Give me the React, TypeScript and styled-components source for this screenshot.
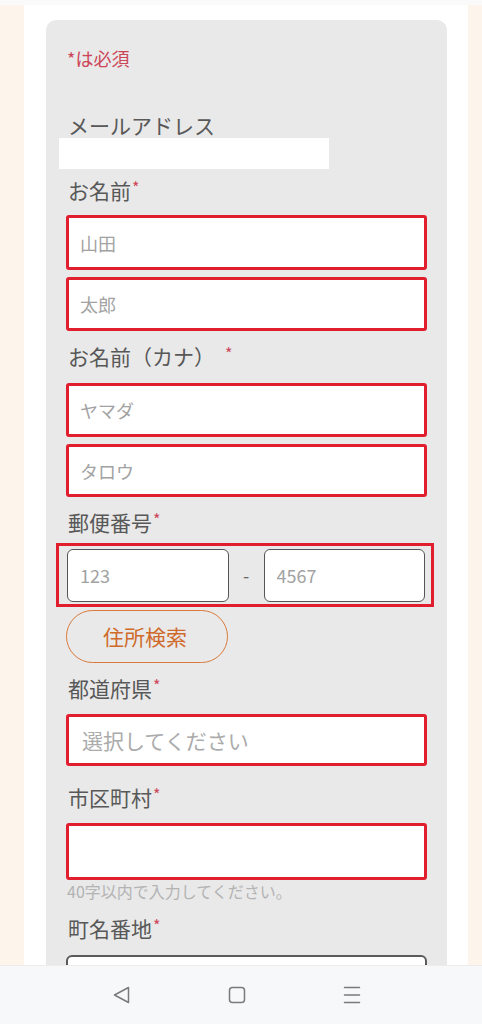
import React from "react";
import styled, { createGlobalStyle } from "styled-components";

const GlobalStyle = createGlobalStyle`
  html, body {
    margin: 0;
    padding: 0;
    background: #fafafa;
    overflow: hidden;
  }
  * {
    box-sizing: border-box;
  }
`;

const FONT = `"Noto Sans CJK JP", "Noto Sans", sans-serif`;

const Page = styled.div`
  height: 1024px;
  padding-top: 5px;
  background: #fafafa;
  overflow: hidden;
`;

const Frame = styled.div`
  display: flex;
  height: 1019px;
  background: #fdf5ec;
  padding: 0 14px 0 24px;
`;

const Column = styled.div`
  width: 444px;
  flex: none;
  background: #ffffff;
  padding: 15px 21px 0 22px;
`;

const Card = styled.form`
  width: 401px;
  background: #e9e9e9;
  border-radius: 10px;
  padding: 25px 20px 40px 20px;
  display: flex;
  flex-direction: column;
  font-family: ${FONT};
`;

const Required = styled.div`
  color: #cc4659;
  font-size: 18px;
  line-height: 26px;
  padding-left: 1px;
`;

const Label = styled.label<{ $mt: number }>`
  display: block;
  height: 26px;
  margin-top: ${(p) => p.$mt}px;
  padding-left: 2px;
  color: #585858;
  font-size: 21px;
  line-height: 26px;
`;

const Star = styled.span<{ $gap?: boolean }>`
  position: relative;
  top: -5px;
  line-height: 0;
  color: #cc4659;
  font-size: 16px;
  margin-left: ${(p) => (p.$gap ? 10 : 1)}px;
`;

const MailBox = styled.div`
  width: 270px;
  height: 31px;
  margin-left: -7px;
  background: #ffffff;
`;

const Field = styled.input<{ $mt: number; $h: number }>`
  display: block;
  width: 100%;
  min-width: 0;
  height: ${(p) => p.$h}px;
  margin-top: ${(p) => p.$mt}px;
  padding: 0 11px;
  border: 3px solid #e01e2e;
  border-radius: 3px;
  background: #ffffff;
  font-family: ${FONT};
  font-size: 18px;
  color: #333;
  outline: none;

  &::placeholder {
    color: #a2a2a2;
  }
`;

const PlainField = styled(Field)`
  border: 2px solid #5a5a5a;
  border-radius: 6px;
`;

const Select = styled.select<{ $mt: number }>`
  display: block;
  width: 100%;
  height: 52px;
  margin-top: ${(p) => p.$mt}px;
  padding: 0 13px;
  border: 3px solid #e01e2e;
  border-radius: 3px;
  background: #ffffff;
  appearance: none;
  font-family: ${FONT};
  font-size: 21px;
  color: #ababab;
  outline: none;
`;

const ZipGroup = styled.div`
  display: flex;
  align-items: center;
  margin: 8px -7px 0 -10px;
  height: 64px;
  padding: 3px 6px 3px 8px;
  border: 3px solid #e01e2e;
`;

const ZipInput = styled.input`
  flex: 1;
  width: 0;
  min-width: 0;
  height: 53px;
  padding: 0 12px;
  border: 1.5px solid #555555;
  border-radius: 6px;
  background: #ffffff;
  font-family: ${FONT};
  font-size: 18px;
  outline: none;

  &::placeholder {
    color: #a2a2a2;
  }
`;

const Dash = styled.span`
  width: 35px;
  flex: none;
  text-align: center;
  color: #666;
  font-size: 18px;
`;

const SearchButton = styled.button`
  align-self: flex-start;
  width: 162px;
  height: 53px;
  margin-top: 3px;
  border: 1.5px solid #d97a3c;
  border-radius: 27px;
  background: transparent;
  color: #cf6a2a;
  font-family: ${FONT};
  font-size: 21px;
  padding: 0 4px 2px 0;
`;

const Help = styled.div`
  margin-top: 2px;
  color: #b3b3b3;
  font-size: 16px;
  line-height: 18px;
  padding-left: 1px;
`;

const NavBar = styled.nav`
  position: fixed;
  left: 0;
  right: 0;
  bottom: 0;
  height: 59px;
  background: #f7f8fa;
  border-top: 1px solid #ececec;
  display: flex;
  align-items: center;
  gap: 97px;
  padding-left: 113px;
`;

const NavIcon = styled.svg`
  width: 18px;
  height: 18px;
  display: block;
`;

export default function App() {
  return (
    <Page>
      <GlobalStyle />
      <Frame>
        <Column>
          <Card onSubmit={(e) => e.preventDefault()}>
            <Required>*は必須</Required>
            <Label $mt={41}>メールアドレス</Label>
            <MailBox />
            <Label $mt={8}>
              お名前<Star>*</Star>
            </Label>
            <Field $mt={12} $h={55} placeholder="山田" />
            <Field $mt={7} $h={54} placeholder="太郎" />
            <Label $mt={12}>
              お名前（カナ）<Star $gap>*</Star>
            </Label>
            <Field $mt={14} $h={54} placeholder="ヤマダ" />
            <Field $mt={7} $h={53} placeholder="タロウ" />
            <Label $mt={12}>
              郵便番号<Star>*</Star>
            </Label>
            <ZipGroup>
              <ZipInput placeholder="123" />
              <Dash>-</Dash>
              <ZipInput placeholder="4567" />
            </ZipGroup>
            <SearchButton type="button">住所検索</SearchButton>
            <Label $mt={12}>
              都道府県<Star>*</Star>
            </Label>
            <Select $mt={13} defaultValue="">
              <option value="" disabled>
                選択してください
              </option>
            </Select>
            <Label $mt={18}>
              市区町村<Star>*</Star>
            </Label>
            <Field $mt={13} $h={57} />
            <Help>40字以内で入力してください。</Help>
            <Label $mt={15}>
              町名番地<Star>*</Star>
            </Label>
            <PlainField $mt={14} $h={54} />
          </Card>
        </Column>
      </Frame>
      <NavBar>
        <NavIcon viewBox="0 0 18 18" fill="none" stroke="#7a7a7a" strokeWidth="1.5" strokeLinejoin="round">
          <path d="M1.5 9 L15.5 1.5 L15.5 16.5 Z" />
        </NavIcon>
        <NavIcon viewBox="0 0 18 18" fill="none" stroke="#7a7a7a" strokeWidth="1.5">
          <rect x="1.5" y="1.5" width="15" height="15" rx="3" />
        </NavIcon>
        <NavIcon viewBox="0 0 18 18" fill="none" stroke="#7a7a7a" strokeWidth="1.5" strokeLinecap="round">
          <path d="M1.5 1.5 H16.5 M1.5 9 H16.5 M1.5 16.5 H16.5" />
        </NavIcon>
      </NavBar>
    </Page>
  );
}
